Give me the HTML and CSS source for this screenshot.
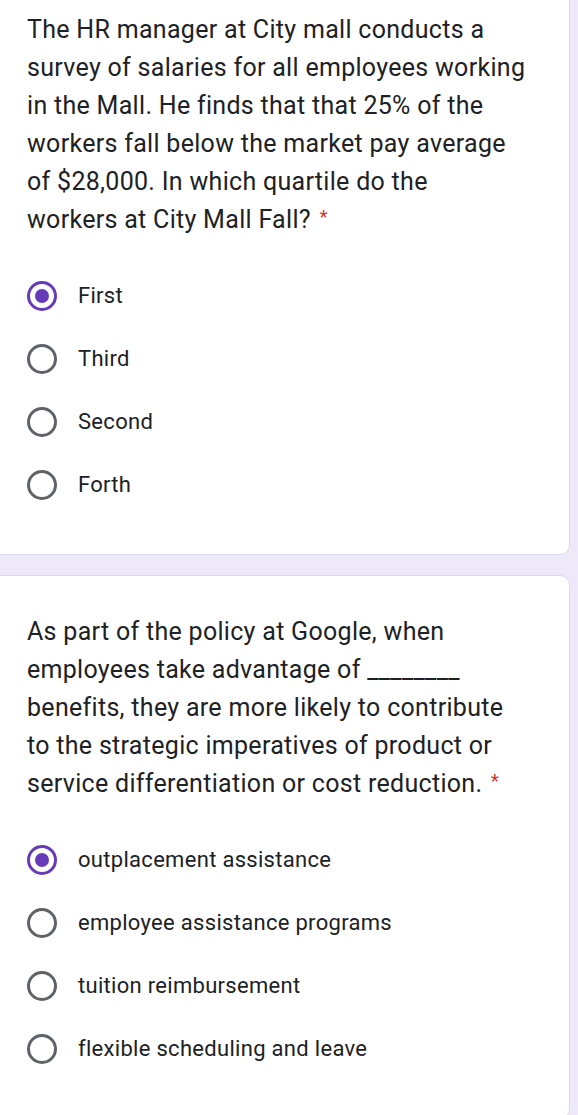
FILE: index.html
```html
<!DOCTYPE html>
<html lang="en">
<head>
    <meta charset="UTF-8">
    <meta name="viewport" content="width=device-width, initial-scale=1.0">
    <title>Quiz</title>
    <link rel="stylesheet" href="styles.css">
</head>
<body>
    <!-- Question 1 -->
    <div class="card first-card">
        <div class="question">The HR manager at City mall conducts a<br>survey of salaries for all employees working<br>in the Mall. He finds that that 25% of the<br>workers fall below the market pay average<br>of $28,000. In which quartile do the<br>workers at City Mall Fall? <span class="required">*</span></div>
        <div class="options">
            <label class="option"><span class="radio checked"></span><span class="label">First</span></label>
            <label class="option"><span class="radio"></span><span class="label">Third</span></label>
            <label class="option"><span class="radio"></span><span class="label">Second</span></label>
            <label class="option"><span class="radio"></span><span class="label">Forth</span></label>
        </div>
    </div>

    <!-- Question 2 -->
    <div class="card">
        <div class="question">As part of the policy at Google, when<br>employees take advantage of ________<br>benefits, they are more likely to contribute<br>to the strategic imperatives of product or<br>service differentiation or cost reduction. <span class="required">*</span></div>
        <div class="options">
            <label class="option"><span class="radio checked"></span><span class="label">outplacement assistance</span></label>
            <label class="option"><span class="radio"></span><span class="label">employee assistance programs</span></label>
            <label class="option"><span class="radio"></span><span class="label">tuition reimbursement</span></label>
            <label class="option"><span class="radio"></span><span class="label">flexible scheduling and leave</span></label>
        </div>
    </div>
</body>
</html>
```

FILE: styles.css
```css
body {
    margin: 0;
    background: #ede9f8;
    font-family: Roboto, 'Noto Sans', Arial, sans-serif;
    color: #202124;
    overflow: hidden;
}

.card {
    background: #fff;
    border: 1px solid #dcd8ea;
    border-radius: 10px;
    margin: 0 8px 20px -12px;
    padding: 37px 0 38px 38px;
}

.first-card {
    margin-top: -20px;
    padding-top: 30px;
}

.question {
    font-size: 25px;
    letter-spacing: 0.3px;
    line-height: 38px;
    white-space: nowrap;
}

.required {
    color: #d93025;
    font-size: 19px;
    vertical-align: top;
    position: relative;
    top: -3px;
    margin-left: 2px;
}

.options {
    margin-top: 25px;
}

.option {
    display: flex;
    align-items: center;
    height: 63px;
}

.radio {
    box-sizing: border-box;
    width: 30px;
    height: 30px;
    border: 3px solid #5f6368;
    border-radius: 50%;
    margin-right: 21px;
    display: flex;
    align-items: center;
    justify-content: center;
    flex-shrink: 0;
}

.radio.checked {
    border-color: #673ab7;
}

.radio.checked::after {
    content: '';
    width: 14px;
    height: 14px;
    border-radius: 50%;
    background: #673ab7;
}

.label {
    font-size: 22px;
    letter-spacing: 0.3px;
}
```
